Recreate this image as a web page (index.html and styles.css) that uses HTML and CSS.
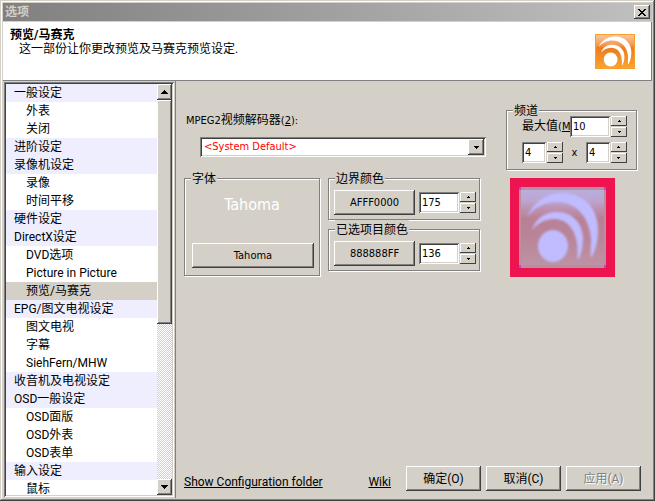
FILE: index.html
```html
<!DOCTYPE html>
<html lang="zh-CN">
<head>
<meta charset="utf-8">
<title>选项</title>
<link rel="stylesheet" href="styles.css">
</head>
<body>
<div class="window">
  <div class="titlebar">
    <span class="title">选项</span>
    <button class="close" aria-label="关闭"><svg width="8" height="7" viewBox="0 0 8 7"><path d="M0 0h2v1h1v1h2v-1h1v-1h2v1h-1v1h-1v1h-1v1h1v1h1v1h1v1h-2v-1h-1v-1h-2v1h-1v1h-2v-1h1v-1h1v-1h1v-1h-1v-1h-1v-1h-1z"/></svg></button>
  </div>
  <header class="header">
    <div>
      <h1>预览/马赛克</h1>
      <p>这一部份让你更改预览及马赛克预览设定.</p>
    </div>
    <svg class="logo" width="40" height="35" viewBox="0 0 87 81" preserveAspectRatio="none">
      <defs>
        <linearGradient id="orange" x1="0" y1="0" x2="0" y2="1"><stop offset="0" stop-color="#fbc9a4"/><stop offset=".3" stop-color="#f39a55"/><stop offset=".4" stop-color="#ee7a1c"/><stop offset="1" stop-color="#fba52e"/></linearGradient>
        <g id="waves">
          <path d="M8 30C14 16 27 6 43 6C65 6 79 21 79 43C79 54 77 63 72 71C71 68 72 60 72 51C70 31 58 15 38 15C25 15 15 21 8 30Z"/>
          <path d="M13 43C17 31 26 25 38 25C54 25 64 37 64 52C64 61 62 68 59 73C58 70 59 64 58 57C56 41 47 32 35 32C25 32 18 37 13 43Z"/>
          <ellipse cx="34" cy="59" rx="15" ry="16"/>
        </g>
      </defs>
      <rect x="1" y="1" width="85" height="79" rx="2" fill="url(#orange)" stroke="#f8a02c" stroke-width="3"/>
      <use href="#waves" fill="#fff"/>
    </svg>
  </header>
  <div class="body">
    <nav class="sidebar">
      <div class="tree">
        <ul class="items">
          <li class="group">一般设定</li>
          <li>外表</li>
          <li>关闭</li>
          <li class="group">进阶设定</li>
          <li class="group">录像机设定</li>
          <li>录像</li>
          <li>时间平移</li>
          <li class="group">硬件设定</li>
          <li class="group">DirectX设定</li>
          <li>DVD选项</li>
          <li>Picture in Picture</li>
          <li class="selected">预览/马赛克</li>
          <li class="group">EPG/图文电视设定</li>
          <li>图文电视</li>
          <li>字幕</li>
          <li>SiehFern/MHW</li>
          <li class="group">收音机及电视设定</li>
          <li class="group">OSD一般设定</li>
          <li>OSD面版</li>
          <li>OSD外表</li>
          <li>OSD表单</li>
          <li class="group">输入设定</li>
          <li>鼠标</li>
        </ul>
        <div class="scrollbar">
          <button class="scroll-btn" aria-label="向上"><svg width="7" height="4" viewBox="0 0 7 4"><path d="M3 0h1v1h1v1h1v1h1v1h-7v-1h1v-1h1v-1h1z"/></svg></button>
          <div class="track"><div class="thumb"></div></div>
          <button class="scroll-btn" aria-label="向下"><svg width="7" height="4" viewBox="0 0 7 4"><path d="M0 0h7v1h-1v1h-1v1h-1v1h-1v-1h-1v-1h-1v-1h-1z"/></svg></button>
        </div>
      </div>
    </nav>
    <main class="main">
      <div class="page">
        <div class="left">
          <label class="decoder-label" for="decoder">MPEG2<span class="cjk">视频解码器</span>(<u>2</u>):</label>
          <div class="combo">
            <select id="decoder"><option>&lt;System Default&gt;</option></select>
            <span class="combo-btn"><svg width="5" height="3" viewBox="0 0 5 3"><path d="M0 0h5v1h-1v1h-1v1h-1v-1h-1v-1h-1z"/></svg></span>
          </div>
          <div class="groups">
            <fieldset class="font-box">
              <legend>字体</legend>
              <div class="sample">Tahoma</div>
              <button class="btn">Tahoma</button>
            </fieldset>
            <div class="colors">
              <fieldset class="color-box">
                <legend>边界颜色</legend>
                <div class="color-row">
                  <button class="btn">AFFF0000</button>
                  <div class="spin"><input type="text" value="175" aria-label="边界颜色">
                    <span class="arrows"><button aria-label="增加"><svg width="3" height="2" viewBox="0 0 3 2"><path d="M1 0h1v1h1v1h-3v-1h1z"/></svg></button><button aria-label="减少"><svg width="3" height="2" viewBox="0 0 3 2"><path d="M0 0h3v1h-1v1h-1v-1h-1z"/></svg></button></span></div>
                </div>
              </fieldset>
              <fieldset class="color-box">
                <legend>已选项目颜色</legend>
                <div class="color-row">
                  <button class="btn">888888FF</button>
                  <div class="spin"><input type="text" value="136" aria-label="已选项目颜色">
                    <span class="arrows"><button aria-label="增加"><svg width="3" height="2" viewBox="0 0 3 2"><path d="M1 0h1v1h1v1h-3v-1h1z"/></svg></button><button aria-label="减少"><svg width="3" height="2" viewBox="0 0 3 2"><path d="M0 0h3v1h-1v1h-1v-1h-1z"/></svg></button></span></div>
                </div>
              </fieldset>
            </div>
          </div>
        </div>
        <div class="right">
          <fieldset class="channel-box">
            <legend>频道</legend>
            <div class="row">
              <label class="max-label" for="max"><span class="cjk">最大值</span>(<u>M</u></label>
              <div class="spin"><input id="max" type="text" value="10">
                <span class="arrows"><button aria-label="增加"><svg width="3" height="2" viewBox="0 0 3 2"><path d="M1 0h1v1h1v1h-3v-1h1z"/></svg></button><button aria-label="减少"><svg width="3" height="2" viewBox="0 0 3 2"><path d="M0 0h3v1h-1v1h-1v-1h-1z"/></svg></button></span></div>
            </div>
            <div class="row size">
              <div class="spin small"><input type="text" value="4" aria-label="列">
                <span class="arrows"><button aria-label="增加"><svg width="3" height="2" viewBox="0 0 3 2"><path d="M1 0h1v1h1v1h-3v-1h1z"/></svg></button><button aria-label="减少"><svg width="3" height="2" viewBox="0 0 3 2"><path d="M0 0h3v1h-1v1h-1v-1h-1z"/></svg></button></span></div>
              <span class="times">x</span>
              <div class="spin small"><input type="text" value="4" aria-label="行">
                <span class="arrows"><button aria-label="增加"><svg width="3" height="2" viewBox="0 0 3 2"><path d="M1 0h1v1h1v1h-3v-1h1z"/></svg></button><button aria-label="减少"><svg width="3" height="2" viewBox="0 0 3 2"><path d="M0 0h3v1h-1v1h-1v-1h-1z"/></svg></button></span></div>
            </div>
          </fieldset>
          <div class="preview">
            <svg width="87" height="81" viewBox="0 0 87 81">
              <defs>
                <linearGradient id="tint" x1="0" y1="0" x2="0" y2="1"><stop offset="0" stop-color="#b8aede"/><stop offset=".14" stop-color="#bda5d0"/><stop offset=".26" stop-color="#bc90b0"/><stop offset=".38" stop-color="#b98095"/><stop offset=".65" stop-color="#ba8598"/><stop offset="1" stop-color="#bd93a5"/></linearGradient>
                <filter id="soft"><feGaussianBlur stdDeviation=".8"/></filter>
              </defs>
              <rect width="87" height="81" fill="#b88f9e"/>
              <rect x="2" y="3" width="83" height="75" fill="url(#tint)"/>
              <use href="#waves" fill="#c0bcff" filter="url(#soft)"/>
              <path d="M0 0h2v3h-2zM85 0h2v3h-2zM0 78h2v3h-2zM85 78h2v3h-2z" fill="#b644f5"/>
            </svg>
          </div>
        </div>
      </div>
      <footer class="footer">
        <a href="#">Show Configuration folder</a>
        <a class="wiki" href="#">Wiki</a>
        <div class="actions">
          <button class="btn">确定(O)</button>
          <button class="btn">取消(C)</button>
          <button class="btn" disabled>应用(A)</button>
        </div>
      </footer>
    </main>
  </div>
</div>
</body>
</html>
```
FILE: styles.css
```css
:root {
  --face: #d4d0c8;
  --shadow: #808080;
  --dark: #404040;
  --ui: Roboto, "Noto Sans CJK SC", sans-serif;
  --tahoma: "DejaVu Sans Condensed", "Noto Sans CJK SC", sans-serif;
}

* { box-sizing: border-box; }

body {
  margin: 0;
  font: 12px/16px var(--ui);
  color: #000;
  background: var(--face);
}

button, input, select { font: inherit; color: inherit; border-radius: 0; margin: 0; }
svg { display: block; flex: none; }

.window {
  height: 100vh;
  padding: 3px;
  display: flex;
  flex-direction: column;
  box-shadow: inset -1px -1px var(--dark), inset 1px 1px var(--face), inset -2px -2px var(--shadow), inset 2px 2px #fff;
}

.titlebar {
  display: flex;
  align-items: center;
  justify-content: space-between;
  height: 18px;
  margin-bottom: 1px;
  padding: 0 2px;
  background: linear-gradient(to right, #808080, #c0c0c0);
}
.title { color: var(--face); font-weight: bold; }

.close, .scroll-btn, .combo-btn, .arrows button, .btn {
  display: flex;
  align-items: center;
  justify-content: center;
  padding: 0;
  border: 0;
  background: var(--face);
  box-shadow: inset -1px -1px var(--dark), inset 1px 1px #fff, inset -2px -2px var(--shadow);
}
.close { width: 16px; height: 14px; }

.header {
  display: flex;
  justify-content: space-between;
  height: 59px;
  padding: 6px 16px 0 7px;
  background: #fff;
  border-right: 1px solid var(--shadow);
  border-bottom: 1px solid var(--shadow);
}
h1 { margin: 0; font-size: 12px; line-height: 14px; }
.header p { margin: 0; padding-left: 9px; line-height: 14px; }
.logo { margin-top: 6px; }

.body { flex: 1; min-height: 0; display: flex; }

.sidebar {
  flex: none;
  width: 173px;
  padding: 1px;
  border-right: 1px solid var(--shadow);
}
.tree {
  display: flex;
  height: 100%;
  padding: 2px;
  background: #fff;
  box-shadow: inset 1px 1px var(--shadow), inset -1px -1px #fff, inset 2px 2px var(--dark), inset -2px -2px var(--face);
}
.items { flex: 1; margin: 0; padding: 0; list-style: none; overflow: hidden; }
.items li { height: 18px; line-height: 18px; padding-left: 20px; white-space: nowrap; }
.items .group { padding-left: 8px; background: #eeeeff; }
.items .selected { background: var(--face); }

.scrollbar { width: 15px; display: flex; flex-direction: column; }
.scroll-btn { height: 16px; flex: none; }
.track { flex: 1; background: repeating-conic-gradient(#fff 0 25%, var(--face) 0 50%) 0 0 / 2px 2px; }
.thumb {
  height: 59%;
  background: var(--face);
  box-shadow: inset -1px -1px var(--dark), inset 1px 1px #fff, inset -2px -2px var(--shadow);
}

.main {
  flex: 1;
  min-width: 0;
  display: flex;
  flex-direction: column;
  justify-content: space-between;
  padding: 20px 11px 7px 8px;
  font: 11px/16px var(--tahoma);
}
.page { display: flex; justify-content: space-between; padding-right: 4px; }
.left { width: 302px; padding-top: 11px; }
.decoder-label { display: block; padding-left: 2px; }
.cjk { font-size: 12px; }

.combo { position: relative; margin: 8px 0 12px 16px; }
.combo select {
  display: block;
  width: 100%;
  height: 20px;
  padding: 0 4px;
  appearance: none;
  border: 0;
  color: #f00;
  background: #fff;
  box-shadow: inset 1px 1px var(--shadow), inset -1px -1px #fff, inset 2px 2px var(--dark), inset -2px -2px var(--face);
}
.combo-btn { position: absolute; top: 2px; right: 2px; bottom: 2px; width: 16px; pointer-events: none; }

.groups { display: flex; gap: 8px; align-items: flex-start; }

fieldset {
  min-width: 0;
  margin: 0;
  padding: 0;
  border: 1px solid var(--shadow);
  box-shadow: 1px 1px #fff, inset 1px 1px #fff;
}
legend {
  margin-left: 6px;
  padding: 2px 1px 0;
  font: 12px/16px var(--ui);
  background: var(--face);
}

.font-box { width: 136px; height: 107px; }
.sample { margin: 8px 0 28px; text-align: center; font-size: 16px; line-height: 20px; color: #fff; }
.btn { height: 25px; }
.font-box .btn { width: 122px; margin-left: 7px; }

.colors { width: 152px; display: flex; flex-direction: column; }
.color-box { height: 51px; }
.color-row { display: flex; align-items: center; gap: 4px; padding: 3px 0 0 5px; }
.color-box .btn { width: 81px; flex: none; }

.spin { display: flex; align-items: center; gap: 1px; }
.spin input {
  width: 40px;
  height: 21px;
  padding: 0 3px;
  border: 0;
  background: #fff;
  box-shadow: inset 1px 1px var(--shadow), inset -1px -1px #fff, inset 2px 2px var(--dark), inset -2px -2px var(--face);
}
.arrows { display: flex; flex-direction: column; gap: 1px; width: 16px; }
.arrows button { height: 10px; box-shadow: inset -1px -1px var(--dark), inset 1px 1px #fff; }

.right { width: 131px; }
.channel-box { height: 69px; }
.channel-box legend { margin-bottom: -3px; }
.row { display: flex; justify-content: space-between; padding: 0 9px 0 15px; }
.max-label { width: 48px; white-space: nowrap; line-height: 21px; }
.row.size { margin-top: 5px; }
.spin.small input { width: 24px; }
.times { line-height: 21px; }
.preview { width: 105px; margin: 8px 0 0 4px; padding: 9px; background: #ee1450; }

.footer { display: flex; align-items: center; font: 12px/16px var(--ui); }
.footer a { color: #000; margin-top: 6px; }
.footer .wiki { margin-left: auto; margin-right: 15px; }
.actions { display: flex; gap: 5px; }
.actions .btn { width: 75px; }
.actions .btn:disabled { color: var(--shadow); text-shadow: 1px 1px #fff; }
```
